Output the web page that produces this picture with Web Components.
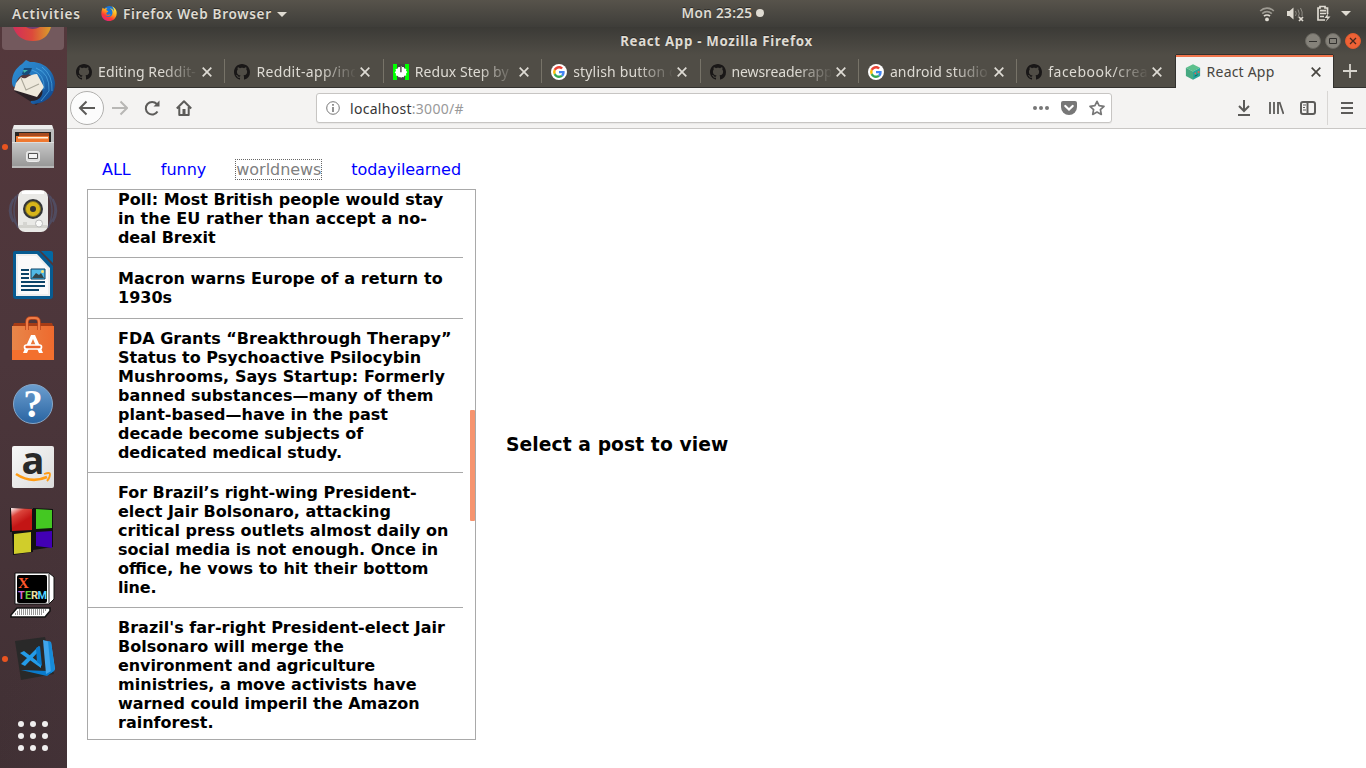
<!DOCTYPE html>
<html lang="en">
<head>
<meta charset="utf-8">
<title>React App - Mozilla Firefox</title>
<style>
html,body{margin:0;height:100%;overflow:hidden;background:#fff}
</style>
</head>
<body>
<desktop-shell></desktop-shell>
<script>
const UI = '"Noto Sans","Open Sans",sans-serif';
const define = (name, css, html) => {
  const t = document.createElement('template');
  t.innerHTML = `<style>*{box-sizing:border-box}svg{display:block;flex:none}${css}</style>${html}`;
  customElements.define(name, class extends HTMLElement {
    constructor() {
      super();
      this.attachShadow({mode: 'open'}).append(t.content.cloneNode(true));
    }
  });
};

const icons = {
  github: `<svg width="16" height="16" viewBox="0 0 16 16"><path fill="#191717" d="M8 0C3.58 0 0 3.58 0 8c0 3.54 2.29 6.53 5.47 7.59.4.07.55-.17.55-.38 0-.19-.01-.82-.01-1.49-2.01.37-2.53-.49-2.69-.94-.09-.23-.48-.94-.82-1.13-.28-.15-.68-.52-.01-.53.63-.01 1.08.58 1.23.82.72 1.21 1.87.87 2.33.66.07-.52.28-.87.51-1.07-1.78-.2-3.64-.89-3.64-3.95 0-.87.31-1.59.82-2.15-.08-.2-.36-1.02.08-2.12 0 0 .67-.21 2.2.82.64-.18 1.32-.27 2-.27s1.36.09 2 .27c1.53-1.04 2.2-.82 2.2-.82.44 1.1.16 1.92.08 2.12.51.56.82 1.27.82 2.15 0 3.07-1.87 3.75-3.65 3.95.29.25.54.73.54 1.48 0 1.07-.01 1.93-.01 2.2 0 .21.15.46.55.38A8.01 8.01 0 0 0 16 8c0-4.42-3.58-8-8-8z"/></svg>`,
  google: `<svg width="16" height="16" viewBox="0 0 16 16"><circle cx="8" cy="8" r="8" fill="#fff"/><g transform="translate(2.1 2.1) scale(.246)"><path fill="#EA4335" d="M24 9.5c3.54 0 6.71 1.22 9.21 3.6l6.85-6.85C35.9 2.38 30.47 0 24 0 14.62 0 6.51 5.38 2.56 13.22l7.98 6.19C12.43 13.72 17.74 9.5 24 9.5z"/><path fill="#4285F4" d="M46.98 24.55c0-1.57-.15-3.09-.38-4.55H24v9.02h12.94c-.58 2.96-2.26 5.48-4.78 7.18l7.73 6c4.51-4.18 7.09-10.36 7.09-17.65z"/><path fill="#FBBC05" d="M10.53 28.59a14.5 14.5 0 0 1 0-9.18l-7.98-6.19a24 24 0 0 0 0 21.56l7.98-6.19z"/><path fill="#34A853" d="M24 48c6.48 0 11.93-2.13 15.89-5.81l-7.73-6c-2.15 1.45-4.92 2.3-8.16 2.3-6.26 0-11.57-4.22-13.47-9.91l-7.98 6.19C6.51 42.62 14.62 48 24 48z"/></g></svg>`,
  redux: `<svg width="16" height="16" viewBox="0 0 16 16"><path fill="#0f0" d="M0 0h16v16H0z"/><path fill="#444" d="M4 0h8v16H4z"/><path fill="#fff" d="M7 2v1L5 3.200 4.500 4.700 2.500 5l.5 2-1.300 1.300L3 9.800l-.2 1.700 2 .4.900 1.400 1.700-.3L8 14l1-1 1.700.3.700-1.600 1.900-.3-.3-1.700L14.300 8 13 6.800l.4-1.800-2-.4L10.700 3 9 3V2H8.600v6.200H7.200V3z"/></svg>`,
  cube: `<svg width="16" height="16" viewBox="0 0 16 16"><path fill="#5dc08c" d="M8 .3l7 3.500-7 3.800L1 3.800z"/><path fill="#46a982" d="M.9 3.800L8 7.600v8.100L.9 12z"/><path fill="#26a69a" d="M15.100 3.800L8 7.600v8.100l7.100-3.700z"/><path d="M9 9.500l2-1.200v2.200M12 8l2.400-1.200v2.400z" fill="#ee5b4e"/><path d="M9.700 12.200l3-1.500" stroke="#145f59"/></svg>`,
  firefox: `<svg width="16" height="16" viewBox="0 0 48 48"><defs><linearGradient id="a" x1=".8" y1=".05" x2=".25" y2="1"><stop offset="0" stop-color="#fff04a"/><stop offset=".4" stop-color="#ffa51a"/><stop offset=".7" stop-color="#ff3b33"/><stop offset="1" stop-color="#e01f83"/></linearGradient></defs><circle cx="25" cy="21" r="18" fill="#1976d8"/><path fill="url(#a)" d="M5 8l5 4c3-2 7-2 9-2-2 3-4 4-3 6l6 3c-1 3-6 3-6 7 2 5 8 4 13 1-2 8-14 9-18 3 5 9 20 8 23-3 2-7-1-14-8-18 9 2 12 7 13 11 1-6-2-12-7-16 10 4 16 12 15 22C46 40 36 48 24 48S1 39 1 26c0-7 2-13 4-18z"/></svg>`
};

define('tray-icons', `:host{display:flex;align-items:center;height:27px;padding-right:15px;color:#dfdbd2}
 .w{margin-right:12px}.v{margin-right:11px}.b{margin-right:10px}`, `
 <svg class="w" width="16" height="16" viewBox="0 0 16 16" fill="none" stroke="currentColor" stroke-width="1.7"><circle cx="8" cy="13.4" r="1.9" fill="currentColor" stroke="none"/><path d="M5 10.2a4.3 4.3 0 0 1 6 0"/><path d="M3.2 7.6a7 7 0 0 1 9.6 0M1.2 5a9.7 9.7 0 0 1 13.6 0" opacity=".55"/></svg>
 <svg class="v" width="18" height="16" viewBox="0 0 18 16"><path fill="currentColor" d="M0 5h2.500L6.500 1.500v12L2.500 10H0z"/><path d="M8.500 5q1.500 2.500 0 5M11 3.500q2.500 4 0 8M13.500 2q2.500 4 1.500 8" fill="none" stroke="currentColor" opacity=".45"/><path d="M12 11l4 4m0-4l-4 4" stroke="currentColor" stroke-width="1.700"/></svg>
 <svg class="b" width="15" height="17" viewBox="0 0 15 17"><path d="M9 15H2V3h2V1.500h5V3h2.500v6M4 5.700h6M4 8.500h6M4 11.500h4" fill="none" stroke="currentColor" stroke-width="1.700"/><path d="M12.500 8l-4 5h3l-2 4 5-5.500h-3z" fill="currentColor"/></svg>
 <svg width="10" height="5"><path d="M0 0h10L5 5z" fill="currentColor"/></svg>`);

define('top-bar', `:host{display:grid;grid-template-columns:1fr auto 1fr;align-items:center;height:27px;padding-left:12px;background:linear-gradient(#57534b,#3e3d39);font:600 13.600px ${UI};color:#dfdbd2;text-shadow:0 -1px #2c2b28}
 .l,.c{display:flex;align-items:center;height:27px}.l svg{margin:0 6px 1px 20px}.l svg+fit-text+svg{margin:1px 0 0 5px}.c{gap:4px;margin-left:68px;padding-bottom:2px}.dot{width:8px;height:8px;border-radius:50%;background:#dfdbd2}tray-icons{justify-self:end}`, `
 <div class="l"><fit-text width="69">Activities</fit-text>${icons.firefox}<fit-text width="149">Firefox Web Browser</fit-text><svg width="10" height="5"><path d="M0 0h10L5 5z" fill="#dfdbd2"/></svg></div>
 <div class="c"><fit-text width="71">Mon 23:25</fit-text><span class="dot"></span></div>
 <tray-icons></tray-icons>`);

define('dock-item', `:host{display:flex;position:relative;height:64px;flex:none;align-items:center;justify-content:center;padding-right:1px}
 :host([running])::before{content:"";position:absolute;left:2px;top:29px;width:6px;height:6px;border-radius:50%;background:#e95420}`, `<slot></slot>`);

define('launcher-dock', `:host{display:flex;flex-direction:column;width:67px;overflow:hidden;background:linear-gradient(100deg,#4f363a00 60%,#47343a66),linear-gradient(#54383c,#4c363b 45%,#403034)}
 svg{overflow:visible}
 .ff{height:24px;flex:none;display:flex;justify-content:center;padding-right:1px}.ff div{width:62px;height:23px;background:#73595d;border-radius:0 0 4px 4px;display:flex;justify-content:center}
 .apps{height:90px;flex:none;display:grid;grid-template-columns:repeat(3,6px);grid-auto-rows:6px;gap:6px;align-content:center;justify-content:center;padding-right:1px}.apps i{border-radius:50%;background:#f0eeee}`, `
 <div class="ff"><div><svg width="42" height="16" viewBox="0 0 42 16"><defs><linearGradient id="f" x1="0" x2="1"><stop stop-color="#d22e5b"/><stop offset=".5" stop-color="#dc493b"/><stop offset="1" stop-color="#d9a02a"/></linearGradient></defs><path d="M1 0h38Q35 14 21 14 6 14 1 0z" fill="url(#f)"/><path d="M14 0q6 4 14 0z" fill="#743e70"/></svg></div></div>
 <dock-item><svg width="48" height="48" viewBox="0 0 48 48"><defs><linearGradient id="t" x1="0" y1="0" x2="1" y2="1"><stop stop-color="#2f8fd6"/><stop offset=".5" stop-color="#2477bd"/><stop offset="1" stop-color="#0c3b82"/></linearGradient></defs><path d="M5 32l22 14 12-8-4-20z" fill="#2b2227"/><path fill="url(#t)" d="M13 5l4-4 4 2C34 2 45 11 46 24c0 12-8 20-21 21-3 0-4-2-3-3 10 0 14-8 10-14-5-8-8-12-13-13-7 0-11 4-12 10-1 5-4 3-4-2 0-8 4-14 10-18z"/><path fill="#eee9dc" d="M7 24l5-6q2 2 5 1 6-4 11-4l7 13-7 10L5 31z"/><path d="M12 19l5 12 13-6" fill="none" stroke="#aaa799" stroke-width="1.100"/><path d="M27 9q14 5 13 23l-8 10M33 8q11 8 10 24M23 11q13 4 12 19" stroke="#58b5ed" fill="none" opacity=".6"/><path d="M13 15l2-6 8 0-2 5q-4 4-8 1z" fill="#174b7a"/><path d="M14 11l5 0-4 3z" fill="#42b5ad"/></svg></dock-item>
 <dock-item running><svg width="44" height="48" viewBox="0 0 44 48"><defs><linearGradient id="g" x2="0" y2="1"><stop stop-color="#c8c8c8"/><stop offset="1" stop-color="#949494"/></linearGradient></defs><path d="M3 2h38l2 5v17H1V7z" fill="#bdbdbd"/><path d="M3 2h38l1 4H2z" fill="#ececec"/><path d="M4 9h36v12H4z" fill="#282522"/><path d="M8 10h30v5H8z" fill="#a64b20"/><path d="M5 13h33v7H5z" fill="#ef7830"/><path d="M7 14h30v1.500H7z" fill="#fff2dc"/><path d="M1 19h42v26H1z" fill="url(#g)"/><path d="M1 19.500h42M1 44h42" stroke="#ddd"/><rect x="15.500" y="28.500" width="13" height="10" rx="2" fill="#ddd" stroke="#ececec"/><path d="M17.500 30.500h9v5h-9z" fill="#f4f4f4" stroke="#555"/></svg></dock-item>
 <dock-item><svg width="50" height="48" viewBox="0 0 50 48"><g fill="none" stroke="#526b98" stroke-width="1.500" opacity=".4"><path d="M8 9q-10 14 0 28M5 12q-7 12 0 23M42 9q10 14 0 28M45 12q7 12 0 23M10 7q-8 16 0 34M40 7q8 16 0 34"/></g><rect x="10" y="3" width="30" height="42" rx="7" fill="#e9e9e6"/><path d="M14 4h22v3H14z" fill="#fff"/><path d="M11 38h28v3H11z" fill="#d3d3ce"/><circle cx="25" cy="22" r="10" fill="#333537"/><circle cx="25" cy="22" r="7.500" fill="#d7b51a" stroke="#837522"/><circle cx="25" cy="22" r="3" fill="#333"/><circle cx="31" cy="36.500" r="3.500" fill="#fafaf8" stroke="#bbb"/><path d="M15 35h4v4h-4z" fill="#d5d5d1"/></svg></dock-item>
 <dock-item><svg width="42" height="50" viewBox="0 0 42 50"><path fill="#075b91" d="M3 1h24l14 15v30q0 3-3 3H4q-3 0-3-3V3q0-2 2-2z"/><path d="M29 1h10q2 0 2 2v10z" fill="#0369a3"/><path d="M4 4h21l13 14v28H4z" fill="#eee"/><path d="M6 6h18l12 13v25H6z" fill="#fafafa"/><path d="M9 20h8M9 24h8M9 28h8M9 32h24M9 36h24M9 40h18" stroke="#0b4367" stroke-width="2"/><path d="M19 19h14v10H19z" fill="#51b9e6" stroke="#0b4367"/><path d="M20 28l4-5 3 2 2-2 3 5z" fill="#34464b"/><circle cx="30.500" cy="21.500" r="1.500" fill="#ffe16a"/></svg></dock-item>
 <dock-item><svg width="44" height="48" viewBox="0 0 44 48"><defs><linearGradient id="s"><stop stop-color="#e8864a"/><stop offset="1" stop-color="#ee6a2e"/></linearGradient></defs><path d="M3 8h38l2 5H1z" fill="#a63c16"/><path d="M1 11h42v34H1z" fill="url(#s)"/><path d="M1 35h42v10H1z" fill="#f3702e"/><path d="M16 15V7q0-4 4-4h4q4 0 4 4v8" fill="none" stroke="#bb461c" stroke-width="3.500"/><path d="M16 15V7q0-4 4-4h4q4 0 4 4v8" fill="none" stroke="#f07c46" stroke-width="2"/><path d="M20 20h4l8 18h-4l-6-14-6 14h-4z" fill="#fff"/><rect x="13.500" y="30" width="17" height="4" rx="2" fill="#eb622b" stroke="#fff" stroke-width="1.700"/></svg></dock-item>
 <dock-item><svg width="42" height="42" viewBox="0 0 42 42"><defs><linearGradient id="h" x2="0" y2="1"><stop stop-color="#6c9ecf"/><stop offset="1" stop-color="#2964a2"/></linearGradient></defs><circle cx="21" cy="22" r="19.500" fill="url(#h)" stroke="#87a7c8"/><text x="21" y="35" text-anchor="middle" font-family="Liberation Serif,serif" font-size="39" font-weight="700" fill="#fff">?</text></svg></dock-item>
 <dock-item><svg width="42" height="42" viewBox="0 0 42 42"><defs><linearGradient id="z" x2="1" y2="1"><stop stop-color="#f7f7f7"/><stop offset="1" stop-color="#dcdcdc"/></linearGradient></defs><rect width="42" height="42" rx="2" fill="url(#z)"/><text x="21" y="28" text-anchor="middle" font-family="Open Sans,sans-serif" font-size="38" font-weight="700" fill="#292929">a</text><path d="M4 28q15 10 31 3" fill="none" stroke="#ff9b13" stroke-width="2.500"/><path d="M32 28q6-2 6 0 0 4-3 7" fill="none" stroke="#ff9b13" stroke-width="1.800"/></svg></dock-item>
 <dock-item><svg width="46" height="50" viewBox="0 0 46 50" style="margin-right:3px"><defs><linearGradient id="r" x2=".4" y2=".7"><stop stop-color="#fff"/><stop offset=".45" stop-color="#db443b"/><stop offset="1" stop-color="#c31515"/></linearGradient></defs><path d="M1 2l24 1v22l-1 21-20 3-1-23H1zM24 2l20 1v38l-20 3z" fill="#111"/><path d="M2 2l21 1v21l-20 1z" fill="url(#r)"/><path d="M27 3l16 1v18l-16 1z" fill="#44c822"/><path d="M5 28l17-2v20L5 48z" fill="#d0cd2b"/><path d="M27 26l16-1v17l-16-2z" fill="#4200b4"/></svg></dock-item>
 <dock-item><svg width="46" height="48" viewBox="0 0 46 48"><path d="M5 2h34l5 4v22l-5 5H5z" fill="#fff" stroke="#111"/><path d="M39 3v29" stroke="#222"/><rect x="7" y="4" width="30" height="28" rx="2" fill="#000"/><text x="8" y="17" font-family="Liberation Serif,serif" font-size="15" font-weight="700" fill="#ff572c">X</text><g font-family="Roboto,sans-serif" font-size="11" font-weight="700"><text x="8" y="28" fill="#d66ad4">T</text><text x="15" y="28" fill="#6ad643">E</text><text x="21" y="28" fill="#eee0a5">R</text><text x="27.500" y="28" fill="#52d5ff">M</text></g><path d="M7 37h33v3l-5 6H1v-2z" fill="#fff" stroke="#111" stroke-width="1.500"/><path d="M9 39h28M7 41h28M5 43h28" stroke="#333" stroke-width="1" stroke-dasharray="1 1"/></svg></dock-item>
 <dock-item running><svg width="48" height="48" viewBox="0 0 48 48" style="margin-left:4px"><path d="M4 6l30-4 9 37-33 6z" fill="#292929"/><path d="M10 35l27 1 6-5v5l-7 5z" fill="#097bcd"/><path d="M32 5l8 2 4 27-9 5z" fill="#40a5ec"/><path d="M37 6l3 1 4 28-4 3z" fill="#168bd8"/><path d="M9 18l4-2 17 13v4zM10 29l18-18v5L14 31z" fill="#249be8"/><path d="M25 13l4-2 2 20-5-4z" fill="#0879ca"/></svg></dock-item>
 <div class="apps"><i></i><i></i><i></i><i></i><i></i><i></i><i></i><i></i><i></i></div>`);

define('browser-tab', `:host{display:flex;flex:none;width:158.360px;height:32px;align-items:center;padding:1px 0 0 9px;position:relative;color:#dedbd4;font:14px ${UI}}
 :host(:not([active]))::after{content:"";position:absolute;right:0;top:4px;width:1px;height:24px;background:#777368}
 :host([active]){width:157.500px;background:#f4f3f2;color:#474540;border-top:2px solid #f0744b;height:33px;padding:0 0 2px 9px;box-shadow:-1px 0 #32312e,1px 0 #32312e,0 -1px #32312e;z-index:1}
 .t{width:99px;margin-left:6px;overflow:hidden;white-space:nowrap;-webkit-mask:linear-gradient(90deg,#000 64px,transparent 101px)}
 :host([active]) .t{-webkit-mask:none}.x{margin-left:5px;flex:none}`, `
 <slot name="icon"></slot><div class="t"><slot></slot></div><svg class="x" width="10" height="10" viewBox="0 0 10 10"><path d="M.7.7l8.600 8.600m0-8.600L.7 9.300" stroke="currentColor" stroke-width="1.700"/></svg>`);

define('tab-strip', `:host{display:flex;height:33px;padding-left:.1px;background:#504d46;border-bottom:1px solid #32312e;align-items:flex-start}.add{margin:9px 0 0 10px}`,
 [['github',98,'Editing Reddit-'],['github',103,'Reddit-app/ind'],['redux',94,'Redux Step by'],['google',103,'stylish button c'],['github',101,'newsreaderapp'],['google',98,'android studio'],['github',100,'facebook/crea'],['cube',68,'React App']]
 .map(([ic,w,t],i)=>`<browser-tab${i===7?' active':''}>${icons[ic].replace('<svg','<svg slot="icon"')}<fit-text width="${w}">${t}</fit-text></browser-tab>`).join('') +
 `<svg class="add" width="14" height="14"><path d="M7 0v14M0 7h14" stroke="#d7d4cd" stroke-width="1.800"/></svg>`);

define('window-title', `:host{display:grid;grid-template-columns:1fr auto 1fr;height:28px;align-items:center;background:linear-gradient(#3b3a36,#504d46);font:700 13.300px ${UI};color:#dfdbd2;text-shadow:0 -1px #2c2b28}
 .b{display:flex;gap:4px;justify-self:end;padding-right:5px}fit-text{grid-column:2}`, `
 <fit-text width="193">React App - Mozilla Firefox</fit-text>
 <div class="b"><svg width="16" height="16"><circle cx="8" cy="8" r="7.500" fill="#85827a" stroke="#696760"/><path d="M4 8.500h8" stroke="#32312e"/></svg><svg width="16" height="16"><circle cx="8" cy="8" r="7.500" fill="#85827a" stroke="#696760"/><path d="M4.500 5.500h7v5h-7z" fill="none" stroke="#32312e"/></svg><svg width="16" height="16"><circle cx="8" cy="8" r="7.500" fill="#ef6236" stroke="#df5b2f"/><path d="M5 5l6 6m0-6l-6 6" stroke="#46281e" stroke-width="1.300"/></svg></div>`);

define('tool-button', `:host{display:flex;width:32px;height:40px;align-items:center;justify-content:center;flex:none}:host([round]){width:34px;height:34px;border:1px solid #b1b0ae;border-radius:50%;background:#fcfcfc}`, `<slot></slot>`);

define('url-bar', `:host{display:flex;align-items:center;width:796px;height:30px;margin:0 116px;border:1px solid #c7c5c3;border-radius:3px;background:#fff;box-shadow:0 1px 1px #0000000d;font:14px ${UI};color:#363636;padding:0 6px 0 9px}
 fit-text{margin-left:10px}span{color:#999}.d{margin-left:auto}.p{margin:0 12px}`, `
 <svg width="14" height="14" fill="none" stroke="#777"><circle cx="7" cy="7" r="6.300"/><path d="M7 6v5M7 3v1.700" stroke-width="1.600"/></svg>
 <fit-text width="114">localhost<span>:3000/#</span></fit-text>
 <svg class="d" width="16" height="6" fill="#777"><circle cx="2" cy="3" r="2"/><circle cx="8" cy="3" r="2"/><circle cx="14" cy="3" r="2"/></svg>
 <svg class="p" width="16" height="15"><path d="M2 0h12q2 0 2 2v4a8 8 0 0 1-16 0V2q0-2 2-2z" fill="#777"/><path d="M4.300 5L8 8.500 11.700 5" fill="none" stroke="#fff" stroke-width="2.200" stroke-linecap="round"/></svg>
 <svg width="16" height="16" viewBox="0 0 16 16"><path d="M8 1.300l2.100 4.400 4.900.6-3.600 3.300.9 4.800L8 12l-4.300 2.400.9-4.800L1 6.300l4.900-.6z" fill="none" stroke="#777" stroke-width="1.700" stroke-linejoin="round"/></svg>`);

define('nav-toolbar', `:host{display:flex;height:41px;align-items:center;padding-left:3px;background:#f4f3f2;border-bottom:1px solid #c9c7c5}
 svg{fill:none;stroke:#5c5b59;stroke-width:2}.sep{width:1px;height:34px;background:#d8d6d4;margin:0 3px}`, `
 <tool-button round><svg width="18" height="16"><path d="M17 8H2M8.500 1.500L2 8l6.500 6.500"/></svg></tool-button>
 <tool-button><svg width="16" height="16" style="stroke:#b8b7b5"><path d="M0 8h15M8.500 1.500L15 8l-6.500 6.500"/></svg></tool-button>
 <tool-button><svg width="16" height="16"><path d="M13.500 11.500A6.300 6.300 0 1 1 12.800 4"/><path d="M15.500.5v6h-6z" fill="#5c5b59" stroke="none"/></svg></tool-button>
 <tool-button><svg width="16" height="16"><path d="M.8 8.500L8 1.300l7.200 7.200M3.300 7v8h9.400V7" stroke-linejoin="round"/><path d="M8 9v6" stroke-width="3"/></svg></tool-button>
 <url-bar></url-bar>
 <tool-button><svg width="14" height="16"><path d="M7 0v11M2 6l5 5 5-5M1 15h12"/></svg></tool-button>
 <tool-button><svg width="16" height="16"><path d="M2 2v12M6 2v12M10 2v12M11.500 2l4 12" stroke-width="1.800"/></svg></tool-button>
 <tool-button><svg width="16" height="14"><rect x="1" y="1" width="14" height="12" rx="2"/><path d="M7.500 1v12"/><path d="M3 4h3M3 6.500h2M3 9h3" stroke-width="1"/></svg></tool-button>
 <span class="sep"></span>
 <tool-button><svg width="12" height="12"><path d="M0 1h12M0 6h12M0 11h12"/></svg></tool-button>`);

define('reddit-nav', `:host{display:flex;gap:30px;padding:31px 0 0 35px;height:60px;align-items:flex-start;font:16px/19px "DejaVu Sans",sans-serif}a{color:#00f;text-decoration:none}.on{color:gray;outline:1px dotted #666;width:85px;letter-spacing:-.04px}.on+a{letter-spacing:-.06px}`, `
 <a>ALL</a><a>funny</a><a class="on">worldnews</a><a>todayilearned</a>`);

define('post-item', `:host{display:block;width:375px;padding:10px 0 10px 30px;border-bottom:1px solid #a9a9a9;font:700 16px/19px "DejaVu Sans",sans-serif;color:#000;white-space:nowrap}:host([first]){padding-top:0}:host([airy]){padding-block:11px}`, `<slot></slot>`);

/* Each line of a headline with the pixels its tracking adds or takes away. */
const posts = [
  ['first', ['Poll: Most British people would stay', .5], ['in the EU rather than accept a no-', 2], ['deal Brexit', -1]],
  ['airy', ['Macron warns Europe of a return to', 2.5], ['1930s', 0]],
  ['', ['FDA Grants “Breakthrough Therapy”', .5], ['Status to Psychoactive Psilocybin', 0], ['Mushrooms, Says Startup: Formerly', 3], ['banned substances—many of them', 0], ['plant-based—have in the past', 0], ['decade become subjects of', 0], ['dedicated medical study.', -2]],
  ['', ['For Brazil’s right-wing President-', -1], ['elect Jair Bolsonaro, attacking', 0], ['critical press outlets almost daily on', 1], ['social media is not enough. Once in', -1], ['office, he vows to hit their bottom', 2], ['line.', -1]],
  ['', ["Brazil's far-right President-elect Jair", .5], ['Bolsonaro will merge the', 0], ['environment and agriculture', -2.5], ['ministries, a move activists have', 1], ['warned could imperil the Amazon', -1.5], ['rainforest.', 0]]
];
define('post-list', `:host{display:block;position:relative;width:389px;height:551px;margin-left:20px;border:1px solid #a9a9a9;overflow:hidden}
 .bar{position:absolute;right:0;top:220px;width:5px;height:111px;background:#f6946f;border-radius:1px}`,
 posts.map(([kind, ...lines]) => `<post-item ${kind}>${lines.map(([s, d]) => `<fit-text adjust="${d}">${s}</fit-text>`).join('<br>')}</post-item>`).join('') + `<div class="bar"></div>`);

define('reddit-app', `:host{display:block;background:#fff;flex:1}.r{display:flex;gap:30px}h3{margin:245px 0 0;font:700 18.720px/22px "DejaVu Sans",sans-serif;letter-spacing:.08px;color:#000}`, `
 <reddit-nav></reddit-nav><div class="r"><post-list></post-list><h3>Select a post to view</h3></div>`);

define('browser-window', `:host{display:flex;flex-direction:column;flex:1;min-width:0;overflow:hidden}`, `
 <window-title></window-title><tab-strip></tab-strip><nav-toolbar></nav-toolbar><reddit-app></reddit-app>`);

define('desktop-shell', `:host{display:flex;flex-direction:column;width:1366px;height:768px;overflow:hidden}.d{display:flex;flex:1;min-height:0}`, `
 <top-bar></top-bar><div class="d"><launcher-dock></launcher-dock><browser-window></browser-window></div>`);

/* Tracks its label: out to the pixels in the width attribute, or by those in adjust.
   A label with an ffi ligature is spaced between words, since tracking breaks it. */
customElements.define('fit-text', class extends HTMLElement {
  constructor() {
    super();
    this.attachShadow({mode: 'open'}).innerHTML = '<style>:host{display:inline-block;white-space:nowrap}:host([adjust]){display:inline}</style><slot></slot>';
  }
  connectedCallback() {
    const text = this.textContent;
    if (this.hasAttribute('adjust')) {
      const d = Number(this.getAttribute('adjust'));
      if (d && text.includes('ffi')) this.style.wordSpacing = d / (text.split(' ').length - 1) + 'px';
      else if (d) this.style.letterSpacing = d / text.length + 'px';
      return;
    }
    this.style.letterSpacing = '.01px';
    const natural = this.getBoundingClientRect().width;
    this.style.letterSpacing = (Number(this.getAttribute('width')) - natural) / text.length + 'px';
  }
});
</script>
</body>
</html>
